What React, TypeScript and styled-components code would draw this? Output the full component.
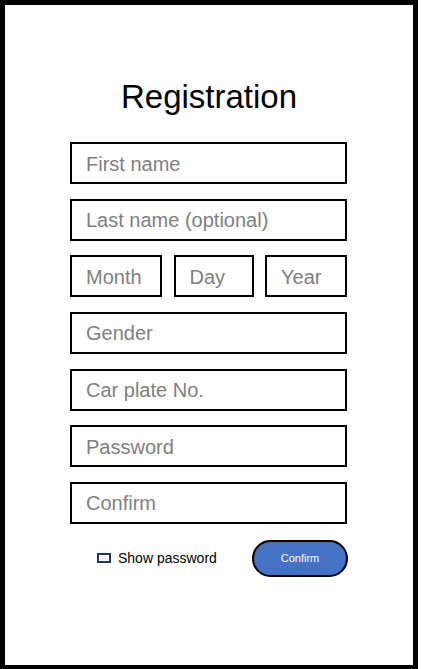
import React from "react";
import styled, { createGlobalStyle } from "styled-components";

const Global = createGlobalStyle`
  html, body { margin: 0; padding: 0; background: #ffffff; }
  * { box-sizing: border-box; }
`;

const Frame = styled.div`
  width: 418px;
  height: 670px;
  border: 5px solid #000;
  display: flex;
  flex-direction: column;
  align-items: center;
  padding-top: 75px;
  font-family: "Liberation Sans", Arial, sans-serif;
`;

const Title = styled.h1`
  margin: 0;
  font-size: 33px;
  line-height: 33px;
  font-weight: 400;
  color: #000;
`;

const Form = styled.form`
  width: 277px;
  margin: 29px 1px 0 0;
  display: flex;
  flex-direction: column;
  gap: 14.67px;
`;

const Field = styled.input<{ $w?: number }>`
  width: ${(p) => (p.$w ? `${p.$w}px` : "100%")};
  height: 42px;
  border: 2px solid #000;
  border-radius: 0;
  padding: 2px 14px 0;
  font-family: "Liberation Sans", Arial, sans-serif;
  font-size: 20px;
  color: #000;
  background: #fff;
  outline: none;
  &::placeholder { color: #7f7f7f; opacity: 1; }
`;

const DateRow = styled.div`
  display: flex;
  justify-content: space-between;
`;

const BottomRow = styled.div`
  margin-top: 1.33px;
  padding-left: 27px;
  display: flex;
  align-items: center;
  justify-content: space-between;
  width: 278px;
`;

const CheckLabel = styled.label`
  display: flex;
  align-items: center;
  gap: 7px;
  font-size: 14px;
  color: #000;
`;

const Box = styled.span`
  width: 14px;
  height: 10px;
  border: 2px solid #1f3864;
`;

const Button = styled.button`
  width: 96px;
  height: 37px;
  border-radius: 19px;
  border: 2px solid #000;
  background: #4472c4;
  color: #fff;
  font-family: "Liberation Sans", Arial, sans-serif;
  font-size: 11px;
  padding: 0;
`;

export default function App() {
  return (
    <>
      <Global />
      <Frame>
        <Title>Registration</Title>
        <Form onSubmit={(e) => e.preventDefault()}>
          <Field placeholder="First name" />
          <Field placeholder="Last name (optional)" />
          <DateRow>
            <Field $w={92} placeholder="Month" />
            <Field $w={80} placeholder="Day" />
            <Field $w={82} placeholder="Year" />
          </DateRow>
          <Field placeholder="Gender" />
          <Field placeholder="Car plate No." />
          <Field type="password" placeholder="Password" />
          <Field type="password" placeholder="Confirm" />
          <BottomRow>
            <CheckLabel>
              <Box />
              Show password
            </CheckLabel>
            <Button type="submit">Confirm</Button>
          </BottomRow>
        </Form>
      </Frame>
    </>
  );
}
